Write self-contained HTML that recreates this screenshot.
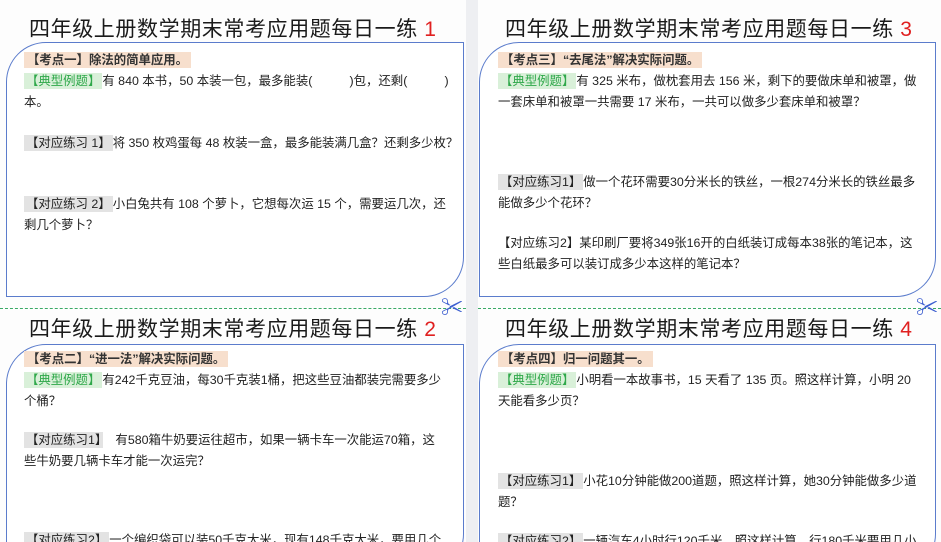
<!DOCTYPE html>
<html><head><meta charset="utf-8"><style>
html,body{margin:0;width:941px;height:542px;overflow:hidden}
body{background:#fbfbfb;font-family:"Liberation Sans","Noto Sans CJK SC",sans-serif;position:relative;color:#222}
.col{position:absolute;top:0;height:542px;background:#fdfdfd}
.t{position:absolute;font-size:21px;color:#1a1a1a;white-space:nowrap;letter-spacing:0.6px}
.t b{color:#e02020;font-weight:normal}
.box{position:absolute;border:1.5px solid #5b7ccc;border-radius:40px 0 40px 0;background:#fff;box-sizing:border-box}
.c{position:absolute;font-size:12.4px;line-height:20.5px;color:#222;white-space:nowrap}
.k{background:#f7dfcd;padding:1px 3px;font-weight:bold;color:#333}
.g{background:#d9f0d9;color:#2fa84a;padding:1px 2px}
.p{background:#e3e3e3;padding:1px 2px}
.dash{position:absolute;top:308px;height:0;border-top:1.5px dashed #3aaa66}
.sc{position:absolute;color:#3d5fd0;font-size:22px;line-height:22px}
</style></head><body>
<div class="col" style="left:0;width:466px"></div>
<div style="position:absolute;left:466px;top:0;width:12px;height:542px;background:#eeeff2"></div>
<div class="col" style="left:478px;width:463px"></div>
<div class="dash" style="left:0;width:466px"></div>
<div class="dash" style="left:478px;width:463px"></div>

<div class="t" style="left:29px;top:13px">四年级上册数学期末常考应用题每日一练 <b>1</b></div>
<div class="box" style="left:6px;top:42px;width:458px;height:255px"></div>
<div class="c" style="left:24px;top:50px"><span class="k">【考点一】除法的简单应用。</span></div>
<div class="c" style="left:24px;top:71px"><span class="g">【典型例题】</span>有 840 本书，50 本装一包，最多能装(　　　)包，还剩(　　　)<br>本。</div>
<div class="c" style="left:24px;top:133px"><span class="p">【对应练习 1】</span>将 350 枚鸡蛋每 48 枚装一盒，最多能装满几盒？还剩多少枚？</div>
<div class="c" style="left:24px;top:194px"><span class="p">【对应练习 2】</span>小白兔共有 108 个萝卜，它想每次运 15 个，需要运几次，还<br>剩几个萝卜？</div>

<div class="t" style="left:505px;top:13px">四年级上册数学期末常考应用题每日一练 <b>3</b></div>
<div class="box" style="left:479px;top:42px;width:457px;height:255px"></div>
<div class="c" style="left:498px;top:50px"><span class="k">【考点三】“去尾法”解决实际问题。</span></div>
<div class="c" style="left:498px;top:71px"><span class="g">【典型例题】</span>有 325 米布，做枕套用去 156 米，剩下的要做床单和被罩，做<br>一套床单和被罩一共需要 17 米布，一共可以做多少套床单和被罩？</div>
<div class="c" style="left:498px;top:172px"><span class="p">【对应练习1】</span>做一个花环需要30分米长的铁丝，一根274分米长的铁丝最多<br>能做多少个花环？</div>
<div class="c" style="left:498px;top:233px">【对应练习2】某印刷厂要将349张16开的白纸装订成每本38张的笔记本，这<br>些白纸最多可以装订成多少本这样的笔记本？</div>

<div class="sc" style="left:441px;top:297px">✂</div>
<div class="sc" style="left:916px;top:297px">✂</div>

<div class="t" style="left:29px;top:313px">四年级上册数学期末常考应用题每日一练 <b>2</b></div>
<div class="box" style="left:6px;top:344px;width:458px;height:230px"></div>
<div class="c" style="left:24px;top:349px"><span class="k">【考点二】“进一法”解决实际问题。</span></div>
<div class="c" style="left:24px;top:370px"><span class="g">【典型例题】</span>有242千克豆油，每30千克装1桶，把这些豆油都装完需要多少<br>个桶？</div>
<div class="c" style="left:24px;top:430px"><span class="p">【对应练习1】</span>　有580箱牛奶要运往超市，如果一辆卡车一次能运70箱，这<br>些牛奶要几辆卡车才能一次运完？</div>
<div class="c" style="left:24px;top:530px"><span class="p">【对应练习2】</span>一个编织袋可以装50千克大米，现有148千克大米，要用几个</div>

<div class="t" style="left:505px;top:313px">四年级上册数学期末常考应用题每日一练 <b>4</b></div>
<div class="box" style="left:479px;top:344px;width:457px;height:230px"></div>
<div class="c" style="left:498px;top:349px"><span class="k">【考点四】归一问题其一。</span></div>
<div class="c" style="left:498px;top:370px"><span class="g">【典型例题】</span>小明看一本故事书，15 天看了 135 页。照这样计算，小明 20<br>天能看多少页？</div>
<div class="c" style="left:498px;top:471px"><span class="p">【对应练习1】</span>小花10分钟能做200道题，照这样计算，她30分钟能做多少道<br>题？</div>
<div class="c" style="left:498px;top:531px"><span class="p">【对应练习2】</span>一辆汽车4小时行120千米，照这样计算，行180千米要用几小</div>
</body></html>
